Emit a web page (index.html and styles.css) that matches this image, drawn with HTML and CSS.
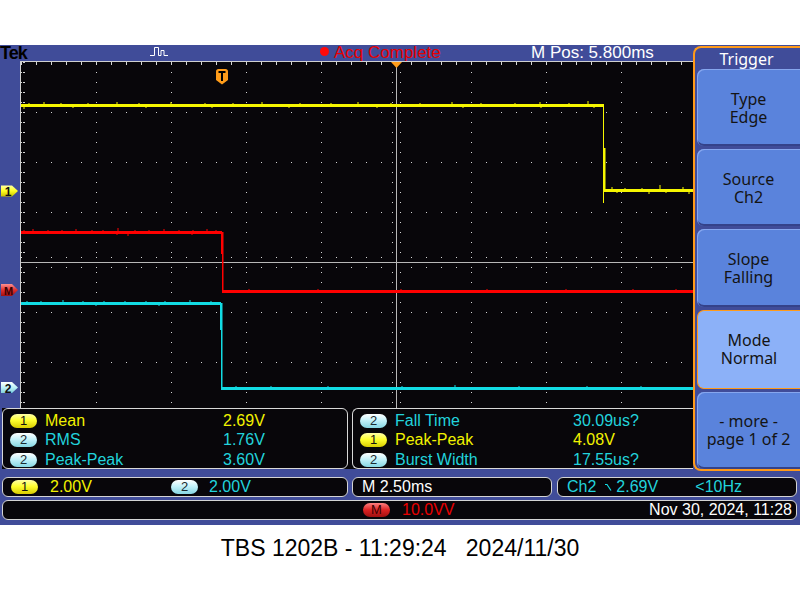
FILE: index.html
```html
<!DOCTYPE html>
<html lang="en">
<head>
    <meta charset="UTF-8">
    <meta name="viewport" content="width=device-width, initial-scale=1.0">
    <title>TBS 1202B</title>
    <link rel="stylesheet" href="styles.css">
</head>
<body>
    <div class="page">
        <div class="scope">
            <div class="upper">
                <div class="left-col">
                    <div class="topbar">
                        <span class="tek">Tek</span>
                        <svg class="pulse" width="18" height="10" viewBox="0 0 18 10">
                            <path d="M0 9.5h4.5V1.5h4v8h2.5v-5h3v5h4" fill="none" stroke="#fff" stroke-width="1"/>
                        </svg>
                        <span class="acq"><span class="rec-dot"></span>Acq Complete</span>
                        <span class="mpos">M Pos: 5.800ms</span>
                    </div>

                    <div class="screen">
                        <div class="strip">
                            <svg width="20" height="347" viewBox="0 61 20 347">
                                <defs>
                                    <linearGradient id="gy" x1="0" y1="0" x2="0" y2="1">
                                        <stop offset="0" stop-color="#ffffa0"/>
                                        <stop offset="0.5" stop-color="#ffff20"/>
                                        <stop offset="1" stop-color="#c8c000"/>
                                    </linearGradient>
                                    <linearGradient id="gr" x1="0" y1="0" x2="0" y2="1">
                                        <stop offset="0" stop-color="#ff9090"/>
                                        <stop offset="0.5" stop-color="#e03030"/>
                                        <stop offset="1" stop-color="#a01010"/>
                                    </linearGradient>
                                    <linearGradient id="gc" x1="0" y1="0" x2="0" y2="1">
                                        <stop offset="0" stop-color="#ffffff"/>
                                        <stop offset="0.5" stop-color="#bdf0f8"/>
                                        <stop offset="1" stop-color="#80d0dc"/>
                                    </linearGradient>
                                </defs>
                                <path d="M1 185.5h11l6 5.5-6 5.5H1z" fill="url(#gy)"/>
                                <text x="8" y="196" class="mk">1</text>
                                <path d="M1 284h11l6 6-6 6H1z" fill="url(#gr)"/>
                                <text x="8.5" y="295" class="mk mk-m">M</text>
                                <path d="M1 382h11l6 5.5-6 5.5H1z" fill="url(#gc)"/>
                                <text x="8" y="392.5" class="mk">2</text>
                            </svg>
                        </div>
                        <div class="grat">
                            <svg width="673" height="347" viewBox="20 61 673 347">
                                <defs>
                                    <pattern id="vdots" x="21" y="62" width="75" height="10" patternUnits="userSpaceOnUse">
                                        <rect width="1" height="1" fill="#d4d4d4"/>
                                    </pattern>
                                    <pattern id="hdots" x="21" y="62" width="15" height="50" patternUnits="userSpaceOnUse">
                                        <rect width="1" height="1" fill="#d4d4d4"/>
                                    </pattern>
                                    <pattern id="tticks" x="21" y="62" width="15" height="10" patternUnits="userSpaceOnUse">
                                        <rect width="1" height="3" fill="#d4d4d4"/>
                                    </pattern>
                                    <pattern id="lticks" x="23" y="62" width="10" height="10" patternUnits="userSpaceOnUse">
                                        <rect width="2" height="1" fill="#d4d4d4"/>
                                    </pattern>
                                    <pattern id="cticks" x="21" y="257" width="15" height="10" patternUnits="userSpaceOnUse">
                                        <rect width="1" height="1" fill="#d4d4d4"/>
                                    </pattern>
                                    <pattern id="vticks" x="392" y="62" width="8" height="10" patternUnits="userSpaceOnUse">
                                        <rect width="1" height="1" fill="#d4d4d4"/>
                                    </pattern>
                                </defs>

                                <rect x="21" y="62" width="672" height="346" fill="url(#vdots)"/>
                                <rect x="21" y="62" width="672" height="346" fill="url(#hdots)"/>
                                <rect x="21" y="62" width="672" height="3" fill="url(#tticks)"/>
                                <rect x="23" y="62" width="2" height="346" fill="url(#lticks)"/>
                                <rect x="21" y="257" width="672" height="11" fill="url(#cticks)"/>
                                <rect x="392" y="62" width="9" height="346" fill="url(#vticks)"/>

                                <line x1="20" y1="61.5" x2="693" y2="61.5" stroke="#cfcfcf"/>
                                <line x1="20.5" y1="61" x2="20.5" y2="408" stroke="#cfcfcf"/>
                                <line x1="21" y1="262.5" x2="693" y2="262.5" stroke="#b8b8b8"/>
                                <line x1="396.5" y1="62" x2="396.5" y2="408" stroke="#b8b8b8"/>

                                <!-- ch1 -->
                                <g fill="#f6f600">
                                    <rect x="21" y="104" width="583" height="3"/>
                                    <rect x="603" y="105" width="1" height="98"/>
                                    <rect x="603" y="148" width="2.5" height="43"/>
                                    <rect x="604" y="189" width="89" height="3"/>
                                </g>
                                <path d="M29 103v1M44 102v2M61 103v1M88 103v1M117 102v2M139 103v1M171 102v2M205 103v1M233 103v1M262 102v2M300 103v1M331 103v1M358 102v2M391 103v1M420 103v1M452 102v2M481 103v1M515 103v1M540 102v2M569 103v1M588 101v3M24 107v2M73 107v1M146 107v1M212 107v1M289 107v1M377 107v1M463 107v1M541 107v1M594 107v1M612 187v2M625 188v1M642 188v1M660 185v4M683 187v2M617 192v1M649 192v2M666 192v1M689 192v2"
                                      stroke="#f6f600" stroke-width="1"/>

                                <!-- math -->
                                <g fill="#ff0000">
                                    <rect x="21" y="231" width="201" height="3"/>
                                    <rect x="221" y="232" width="1.5" height="22"/>
                                    <rect x="222" y="232" width="1.5" height="59"/>
                                    <rect x="222" y="290" width="471" height="3"/>
                                </g>
                                <path d="M24 230v1M33 229v2M48 230v1M62 230v1M76 229v2M92 230v1M103 230v1M118 228v3M135 230v1M149 230v1M164 229v2M179 230v1M193 230v1M207 229v2M216 230v1M117 234v1M128 234v2M192 234v1M249 289v1M318 289v1M401 289v1M487 289v1M566 289v1M633 289v1M676 289v1"
                                      stroke="#ff0000" stroke-width="1"/>

                                <!-- ch2 -->
                                <g fill="#12dce4">
                                    <rect x="21" y="302" width="200" height="3"/>
                                    <rect x="220" y="303" width="1.5" height="27"/>
                                    <rect x="221" y="303" width="1.5" height="87"/>
                                    <rect x="221" y="387" width="472" height="3"/>
                                </g>
                                <path d="M27 301v1M41 301v1M63 300v2M83 301v1M104 301v1M125 301v1M146 301v1M165 301v1M190 300v2M211 301v1M96 305v1M159 305v1M236 386v1M271 386v1M328 386v1M402 386v1M455 385v2M519 386v1M587 386v1M641 386v1"
                                      stroke="#12dce4" stroke-width="1"/>

                                <!-- trigger position -->
                                <polygon points="391,62 402,62 396.5,68" fill="#ff9c1a"/>
                                <path d="M216 71.5a2.5 2.5 0 0 1 2.5-2.5h7a2.5 2.5 0 0 1 2.5 2.5v8.5l-6 4.5-6-4.5z" fill="#ff9c1a"/>
                                <path d="M218.5 71h7v2h-2.5v8h-2v-8h-2.5z" fill="#000"/>
                            </svg>
                        </div>
                    </div>

                    <div class="meas">
                        <div class="meas-panel">
                            <span class="badge b1">1</span><span class="yel">Mean</span><span class="yel">2.69V</span>
                            <span class="badge b2">2</span><span class="cyn">RMS</span><span class="cyn">1.76V</span>
                            <span class="badge b2">2</span><span class="cyn">Peak-Peak</span><span class="cyn">3.60V</span>
                        </div>
                        <div class="meas-panel open">
                            <span class="badge b2">2</span><span class="cyn">Fall Time</span><span class="cyn">30.09us?</span>
                            <span class="badge b1">1</span><span class="yel">Peak-Peak</span><span class="yel">4.08V</span>
                            <span class="badge b2">2</span><span class="cyn">Burst Width</span><span class="cyn">17.55us?</span>
                        </div>
                    </div>
                </div>

                <div class="menu">
                    <div class="menu-title">Trigger</div>
                    <div class="mbtn"><span>Type</span><span>Edge</span></div>
                    <div class="mbtn"><span>Source</span><span>Ch2</span></div>
                    <div class="mbtn"><span>Slope</span><span>Falling</span></div>
                    <div class="mbtn on"><span>Mode</span><span>Normal</span></div>
                    <div class="mbtn"><span>- more -</span><span>page 1 of 2</span></div>
                </div>
            </div>

            <div class="status">
                <div class="box box-ch">
                    <span class="scale"><span class="badge b1">1</span><span class="yel">2.00V</span></span>
                    <span class="scale"><span class="badge b2">2</span><span class="cyn">2.00V</span></span>
                </div>
                <div class="box box-time">M 2.50ms</div>
                <div class="box box-trig">
                    <span class="cyn">Ch2</span>
                    <svg class="edge" width="8" height="9" viewBox="0 0 8 9">
                        <path d="M0 1.5h2L6 7.5" fill="none" stroke="#12dce4" stroke-width="1.2"/>
                    </svg>
                    <span class="cyn trig-lvl">2.69V</span>
                    <span class="cyn">&lt;10Hz</span>
                </div>
            </div>

            <div class="status status-last">
                <div class="box box-wide">
                    <span class="badge bm">M</span>
                    <span class="red">10.0VV</span>
                    <span class="date">Nov 30, 2024, 11:28</span>
                </div>
            </div>
        </div>

        <div class="caption">TBS 1202B - 11:29:24   2024/11/30</div>
    </div>
</body>
</html>
```

FILE: styles.css
```css
* {
    box-sizing: border-box;
}
body {
    margin: 0;
    background: #fff;
    font-family: "Liberation Sans", Arial, sans-serif;
}
.page {
    padding-top: 45px;
}
.scope {
    width: 800px;
    height: 480px;
    background: #404c99;
    display: flex;
    flex-direction: column;
}
.upper {
    display: flex;
    height: 426px;
}
.left-col {
    width: 693px;
    display: flex;
    flex-direction: column;
}

/* top status bar */
.topbar {
    height: 16px;
    display: flex;
    align-items: center;
    font-size: 17px;
    line-height: 16px;
    color: #fff;
    white-space: nowrap;
}
.tek {
    width: 150px;
    color: #000;
    font-weight: bold;
    font-size: 18px;
    letter-spacing: -1px;
}
.pulse {
    display: block;
    margin-top: -4px;
}
.acq {
    margin-left: 152px;
    width: 211px;
    display: flex;
    align-items: center;
    color: #e80000;
}
.rec-dot {
    width: 9px;
    height: 9px;
    border-radius: 50%;
    background: #ff0a0a;
    margin: -4px 5px 0 0;
}

/* waveform area */
.screen {
    height: 347px;
    display: flex;
}
.strip {
    width: 20px;
}
.strip svg,
.grat svg {
    display: block;
}
.mk {
    font-family: "Liberation Sans", Arial, sans-serif;
    font-weight: bold;
    font-size: 12px;
    fill: #111;
    text-anchor: middle;
}
.mk-m {
    font-size: 11px;
    fill: #3a0000;
}
.grat {
    flex: 1;
    background: #08060a;
}

/* measurements */
.meas {
    height: 62px;
    display: flex;
    gap: 4px;
    background: #08060a;
    border-left: 2px solid #404c99;
    border-bottom: 1px solid #404c99;
}
.meas-panel {
    width: 346px;
    border: 1px solid #d8d8d8;
    border-radius: 6px;
    background: #08060a;
    padding: 2px 0 0 7px;
    display: grid;
    grid-template-columns: 27px 170px auto;
    grid-auto-rows: 19.5px;
    column-gap: 8px;
    align-items: center;
    font-size: 16px;
}
.meas-panel.open {
    flex: 1;
    border-right: none;
    border-radius: 6px 0 0 6px;
}
.yel {
    color: #f2f200;
}
.cyn {
    color: #22d3dc;
}
.red {
    color: #e80000;
}
.badge {
    display: inline-flex;
    align-items: center;
    justify-content: center;
    width: 27px;
    height: 14px;
    border-radius: 7px;
    font-size: 13px;
    line-height: 14px;
    color: #111;
}
.b1 {
    background: linear-gradient(#ffffa8, #ffff30 45%, #d8cc00);
}
.b2 {
    background: linear-gradient(#ffffff, #c4f2fa 45%, #86d6e2);
    color: #1a2a30;
}
.bm {
    background: linear-gradient(#ff8080, #dd2222 50%, #a01010);
    color: #3a0000;
}

/* right-hand menu */
.menu {
    width: 107px;
    height: 425px;
    margin-top: 1px;
    border: 2px solid #ff9a1a;
    border-right: none;
    border-radius: 8px 0 0 8px;
    background: #404c99;
    padding-left: 2px;
    display: flex;
    flex-direction: column;
    gap: 3px;
    font-family: "Noto Sans", sans-serif;
    font-size: 16px;
}
.menu-title {
    height: 18px;
    line-height: 18px;
    padding-top: 2px;
    color: #fff;
    text-align: center;
    padding-right: 4px;
}
.mbtn {
    flex: 1;
    display: flex;
    flex-direction: column;
    align-items: center;
    justify-content: center;
    text-align: center;
    line-height: 18px;
    color: #141414;
    background: #5a83dc;
    border-radius: 7px 0 0 7px;
    box-shadow: inset 1px 1px 0 #86a6ee, inset 0 -2px 0 #34428a;
}
.mbtn span {
    display: block;
    height: 18px;
    white-space: nowrap;
}
.mbtn.on {
    background: #8cb1f8;
    border: 1px solid #ff9a1a;
    border-right: none;
    box-shadow: none;
}

/* bottom status rows */
.status {
    display: flex;
    height: 20px;
    margin-top: 6px;
    padding-left: 2px;
    font-size: 16px;
    line-height: 18px;
}
.status-last {
    margin-top: 3px;
}
.box {
    display: flex;
    align-items: center;
    border: 1px solid #d4d4d4;
    border-radius: 6px;
    background: #08060a;
    white-space: nowrap;
}
.box-ch {
    width: 346px;
    margin-right: 4px;
    padding-left: 8px;
}
.scale {
    width: 160px;
    display: flex;
    align-items: center;
    gap: 12px;
}
.scale .cyn {
    margin-left: -1px;
}
.box-time {
    width: 200px;
    margin-right: 5px;
    padding-left: 9px;
    color: #fff;
}
.box-trig {
    width: 240px;
    padding-left: 9px;
}
.edge {
    margin: 0 3px 0 9px;
}
.trig-lvl {
    width: 79px;
}
.box-wide {
    width: 795px;
    padding: 0 4px 0 0;
}
.box-wide .bm {
    margin-left: 360px;
}
.box-wide .red {
    margin-left: 12px;
}
.date {
    margin-left: auto;
    color: #fff;
}

.caption {
    margin-top: 10px;
    text-align: center;
    font-size: 23px;
    line-height: 26px;
    white-space: pre;
    color: #000;
}
```
